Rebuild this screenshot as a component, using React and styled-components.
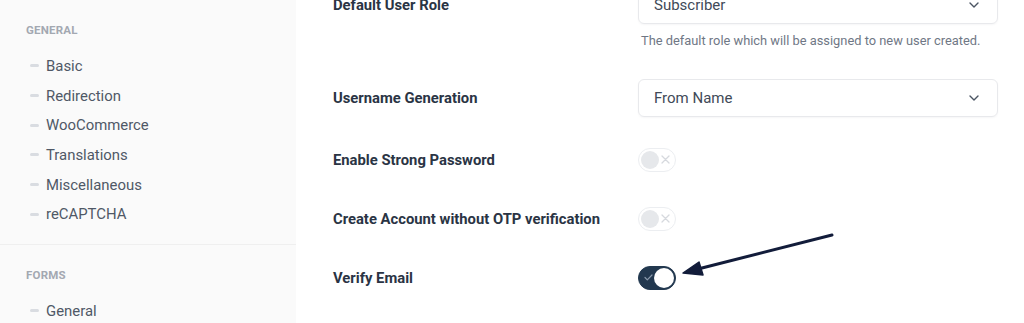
import styled, { createGlobalStyle } from 'styled-components'

const GlobalStyle = createGlobalStyle`
  html, body {
    margin: 0;
    padding: 0;
    background: #ffffff;
    font-family: Roboto, "Liberation Sans", sans-serif;
    overflow: hidden;
  }
`

const sections = [
  { title: 'General', items: ['Basic', 'Redirection', 'WooCommerce', 'Translations', 'Miscellaneous', 'reCAPTCHA'] },
  { title: 'Forms', items: ['General', 'Fields'] },
]

const Chevron = () => (
  <svg width="10" height="6" viewBox="0 0 10 6" fill="none">
    <path d="M1 1l4 4 4-4" stroke="#4b5563" strokeWidth="1.4" strokeLinecap="round" strokeLinejoin="round" />
  </svg>
)

const Toggle = ({ on }) => (
  <Switch $on={on}>
    {on ? (
      <svg width="9" height="7" viewBox="0 0 9 7" fill="none">
        <path d="M1 3.5l2.3 2.3L8 1" stroke="#8a99ab" strokeWidth="1.2" strokeLinecap="round" strokeLinejoin="round" />
      </svg>
    ) : null}
    <Knob $on={on} />
    {!on ? (
      <svg width="9" height="9" viewBox="0 0 9 9" fill="none">
        <path d="M1 1l7 7M8 1L1 8" stroke="#d6d9de" strokeWidth="1.3" strokeLinecap="round" />
      </svg>
    ) : null}
  </Switch>
)

const App = () => {
  return (
    <>
      <GlobalStyle />
      <Page>
        <Sidebar>
          {sections.map((s) => (
            <Section key={s.title}>
              <SectionTitle>{s.title}</SectionTitle>
              <NavList>
                {s.items.map((item) => (
                  <NavItem key={item}>
                    <Dash />
                    {item}
                  </NavItem>
                ))}
              </NavList>
            </Section>
          ))}
        </Sidebar>
        <Main>
          <Row $top>
            <Label $top>Default User Role</Label>
            <Field>
              <Select>
                Subscriber
                <Chevron />
              </Select>
              <Help>The default role which will be assigned to new user created.</Help>
            </Field>
          </Row>
          <Row>
            <Label>Username Generation</Label>
            <Field>
              <Select>
                From Name
                <Chevron />
              </Select>
            </Field>
          </Row>
          <Row>
            <Label>Enable Strong Password</Label>
            <Field>
              <Toggle />
            </Field>
          </Row>
          <Row>
            <Label>Create Account without OTP verification</Label>
            <Field>
              <Toggle />
            </Field>
          </Row>
          <Row>
            <Label>Verify Email</Label>
            <Field>
              <Toggle on />
            </Field>
          </Row>
          <Arrow width="156" height="48" viewBox="0 0 156 48">
            <path d="M152 5L18 39" stroke="#121c3a" strokeWidth="3" strokeLinecap="round" />
            <path d="M3 43L19 32L23 45Z" fill="#121c3a" stroke="#121c3a" strokeWidth="1.5" strokeLinejoin="round" />
          </Arrow>
        </Main>
      </Page>
    </>
  )
}

export default App

const Page = styled.div`
  display: flex;
  width: 1024px;
  height: 323px;
  overflow: hidden;
`
const Sidebar = styled.aside`
  width: 296px;
  flex-shrink: 0;
  background: #fafafa;
`
const Section = styled.div`
  padding: 23px 0 15px 26px;
  & + & {
    border-top: 1px solid #efefef;
  }
`
const SectionTitle = styled.div`
  font-size: 11.5px;
  line-height: 14px;
  font-weight: 700;
  text-transform: uppercase;
  letter-spacing: 0.2px;
  color: #a3a8b1;
`
const NavList = styled.ul`
  list-style: none;
  margin: 14px 0 0;
  padding: 0 0 0 4px;
`
const NavItem = styled.li`
  display: flex;
  align-items: center;
  gap: 7px;
  height: 29.7px;
  font-size: 14.9px;
  color: #4f5866;
`
const Dash = styled.span`
  width: 9px;
  height: 3px;
  border-radius: 2px;
  background: #d9dce1;
`
const Main = styled.main`
  position: relative;
  flex: 1;
  padding: 0 26px 0 37px;
  margin-top: -27px;
`
const Row = styled.div`
  display: grid;
  grid-template-columns: 305px 360px;
  align-items: ${(p) => (p.$top ? 'start' : 'center')};
  min-height: 59px;
  padding: ${(p) => (p.$top ? '13px 0 16px' : '13px 0')};
  box-sizing: border-box;
`
const Label = styled.div`
  font-size: 14.8px;
  line-height: ${(p) => (p.$top ? '38px' : '20px')};
  font-weight: 700;
  color: #2a3444;
`
const Field = styled.div`
  display: flex;
  flex-direction: column;
  align-items: flex-start;
`
const Select = styled.div`
  display: flex;
  align-items: center;
  justify-content: space-between;
  width: 100%;
  height: 38px;
  box-sizing: border-box;
  padding: 0 18px 0 15px;
  border: 1px solid #e8e9ec;
  border-radius: 6px;
  box-shadow: 0 1px 2px rgba(16, 24, 40, 0.04);
  font-size: 15px;
  color: #414a58;
`
const Help = styled.div`
  margin: 8px 0 0 3px;
  font-size: 12.85px;
  line-height: 18px;
  color: #6f7785;
`
const Switch = styled.div`
  display: flex;
  align-items: center;
  justify-content: space-between;
  width: 38px;
  height: 24px;
  box-sizing: border-box;
  padding: ${(p) => (p.$on ? '2px 1px 2px 5px' : '2px 5px 2px 2px')};
  border-radius: 12px;
  border: 1px solid ${(p) => (p.$on ? '#22384f' : '#eceef1')};
  background: ${(p) => (p.$on ? '#22384f' : '#ffffff')};
`
const Knob = styled.span`
  width: ${(p) => (p.$on ? '20px' : '18px')};
  height: ${(p) => (p.$on ? '20px' : '18px')};
  border-radius: 50%;
  background: ${(p) => (p.$on ? '#ffffff' : '#e6e8eb')};
`
const Arrow = styled.svg`
  position: absolute;
  left: 384px;
  top: 257px;
`
